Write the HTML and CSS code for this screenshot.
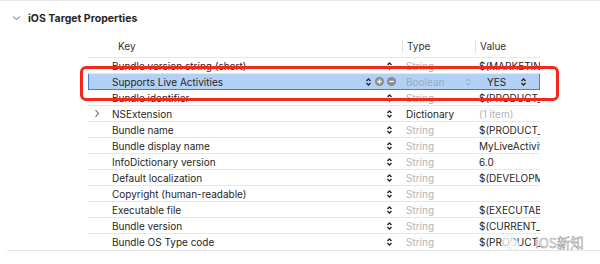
FILE: index.html
```html
<!DOCTYPE html>
<html lang="en">
<head>
    <meta charset="UTF-8">
    <title>iOS Target Properties</title>
    <link rel="stylesheet" href="styles.css">
</head>
<body>
<div class="pane">
    <div class="section-title">
        <svg class="chevron-down" width="9" height="6" viewBox="0 0 9 6"><path d="M1 1.5 L4.5 4.5 L8 1.5" fill="none" stroke="#a0a0a0" stroke-width="1.1"/></svg>
        <span>iOS Target Properties</span>
    </div>

    <div class="table">
        <div class="head">
            <div class="hcell key-h">Key</div>
            <div class="hcell type-h">Type</div>
            <div class="hcell value-h">Value</div>
        </div>

        <div class="row">
            <div class="cell key"><span class="name">Bundle version string (short)</span><svg class="stepper" width="7" height="10" viewBox="0 0 7 10"><path d="M1.5 4 L3.5 2 L5.5 4 M1.5 6 L3.5 8 L5.5 6" fill="none" stroke="#222" stroke-width="1.3"/></svg></div>
            <div class="cell type muted">String</div>
            <div class="cell value">$(MARKETING_VERSION)</div>
        </div>

        <div class="row selected">
            <div class="cell key">
                <span class="name">Supports Live Activities</span>
                <span class="tools">
                    <svg class="stepper" width="7" height="10" viewBox="0 0 7 10"><path d="M1.5 4 L3.5 2 L5.5 4 M1.5 6 L3.5 8 L5.5 6" fill="none" stroke="#222" stroke-width="1.3"/></svg>
                    <svg class="round" width="9" height="9" viewBox="0 0 9 9"><circle cx="4.5" cy="4.5" r="4.5" fill="#8b8b8b"/><path d="M2.2 4.5 H6.8 M4.5 2.2 V6.8" stroke="#fff" stroke-width="1.3"/></svg>
                    <svg class="round" width="9" height="9" viewBox="0 0 9 9"><circle cx="4.5" cy="4.5" r="4.5" fill="#8b8b8b"/><path d="M2.2 4.5 H6.8" stroke="#fff" stroke-width="1.3"/></svg>
                </span>
            </div>
            <div class="cell type muted split"><span>Boolean</span><svg class="stepper" width="7" height="10" viewBox="0 0 7 10"><path d="M1.5 4 L3.5 2 L5.5 4 M1.5 6 L3.5 8 L5.5 6" fill="none" stroke="#9fb3cc" stroke-width="1.1"/></svg></div>
            <div class="cell value split yes"><span>YES</span><svg class="stepper" width="7" height="10" viewBox="0 0 7 10"><path d="M1.5 4 L3.5 2 L5.5 4 M1.5 6 L3.5 8 L5.5 6" fill="none" stroke="#222" stroke-width="1.3"/></svg></div>
        </div>

        <div class="row">
            <div class="cell key"><span class="name">Bundle identifier</span><svg class="stepper" width="7" height="10" viewBox="0 0 7 10"><path d="M1.5 4 L3.5 2 L5.5 4 M1.5 6 L3.5 8 L5.5 6" fill="none" stroke="#222" stroke-width="1.3"/></svg></div>
            <div class="cell type muted">String</div>
            <div class="cell value">$(PRODUCT_BUNDLE_IDENTIFIER)</div>
        </div>

        <div class="row">
            <div class="cell key"><svg class="disclosure" width="6" height="9" viewBox="0 0 6 9"><path d="M1.5 1 L4.5 4.5 L1.5 8" fill="none" stroke="#666" stroke-width="1.1"/></svg><span class="name">NSExtension</span><svg class="stepper" width="7" height="10" viewBox="0 0 7 10"><path d="M1.5 4 L3.5 2 L5.5 4 M1.5 6 L3.5 8 L5.5 6" fill="none" stroke="#222" stroke-width="1.3"/></svg></div>
            <div class="cell type">Dictionary</div>
            <div class="cell value muted">(1 item)</div>
        </div>

        <div class="row">
            <div class="cell key"><span class="name">Bundle name</span><svg class="stepper" width="7" height="10" viewBox="0 0 7 10"><path d="M1.5 4 L3.5 2 L5.5 4 M1.5 6 L3.5 8 L5.5 6" fill="none" stroke="#222" stroke-width="1.3"/></svg></div>
            <div class="cell type muted">String</div>
            <div class="cell value">$(PRODUCT_NAME)</div>
        </div>

        <div class="row">
            <div class="cell key"><span class="name">Bundle display name</span><svg class="stepper" width="7" height="10" viewBox="0 0 7 10"><path d="M1.5 4 L3.5 2 L5.5 4 M1.5 6 L3.5 8 L5.5 6" fill="none" stroke="#222" stroke-width="1.3"/></svg></div>
            <div class="cell type muted">String</div>
            <div class="cell value">MyLiveActivity</div>
        </div>

        <div class="row">
            <div class="cell key"><span class="name">InfoDictionary version</span><svg class="stepper" width="7" height="10" viewBox="0 0 7 10"><path d="M1.5 4 L3.5 2 L5.5 4 M1.5 6 L3.5 8 L5.5 6" fill="none" stroke="#222" stroke-width="1.3"/></svg></div>
            <div class="cell type muted">String</div>
            <div class="cell value">6.0</div>
        </div>

        <div class="row">
            <div class="cell key"><span class="name">Default localization</span><svg class="stepper" width="7" height="10" viewBox="0 0 7 10"><path d="M1.5 4 L3.5 2 L5.5 4 M1.5 6 L3.5 8 L5.5 6" fill="none" stroke="#222" stroke-width="1.3"/></svg></div>
            <div class="cell type muted">String</div>
            <div class="cell value">$(DEVELOPMENT_LANGUAGE)</div>
        </div>

        <div class="row">
            <div class="cell key"><span class="name">Copyright (human-readable)</span><svg class="stepper" width="7" height="10" viewBox="0 0 7 10"><path d="M1.5 4 L3.5 2 L5.5 4 M1.5 6 L3.5 8 L5.5 6" fill="none" stroke="#222" stroke-width="1.3"/></svg></div>
            <div class="cell type muted">String</div>
            <div class="cell value"></div>
        </div>

        <div class="row">
            <div class="cell key"><span class="name">Executable file</span><svg class="stepper" width="7" height="10" viewBox="0 0 7 10"><path d="M1.5 4 L3.5 2 L5.5 4 M1.5 6 L3.5 8 L5.5 6" fill="none" stroke="#222" stroke-width="1.3"/></svg></div>
            <div class="cell type muted">String</div>
            <div class="cell value">$(EXECUTABLE_NAME)</div>
        </div>

        <div class="row">
            <div class="cell key"><span class="name">Bundle version</span><svg class="stepper" width="7" height="10" viewBox="0 0 7 10"><path d="M1.5 4 L3.5 2 L5.5 4 M1.5 6 L3.5 8 L5.5 6" fill="none" stroke="#222" stroke-width="1.3"/></svg></div>
            <div class="cell type muted">String</div>
            <div class="cell value">$(CURRENT_PROJECT_VERSION)</div>
        </div>

        <div class="row last">
            <div class="cell key"><span class="name">Bundle OS Type code</span><svg class="stepper" width="7" height="10" viewBox="0 0 7 10"><path d="M1.5 4 L3.5 2 L5.5 4 M1.5 6 L3.5 8 L5.5 6" fill="none" stroke="#222" stroke-width="1.3"/></svg></div>
            <div class="cell type muted">String</div>
            <div class="cell value">$(PRODUCT_BUNDLE_PACKAGE_TYPE)</div>
        </div>
    </div>
    <div class="section-end"></div>

    <!-- annotation drawn over the screenshot -->
    <div class="highlight"></div>

    <div class="watermark">
        <svg class="wm-logo" width="20" height="17" viewBox="0 0 20 17"><circle cx="7.5" cy="7.5" r="6.5" fill="rgba(255,255,255,0.75)" stroke="#cfcfcf" stroke-width="0.8" stroke-dasharray="1.5 1"/><circle cx="13" cy="11" r="5.2" fill="rgba(255,255,255,0.75)" stroke="#cfcfcf" stroke-width="0.8" stroke-dasharray="1.5 1"/></svg>
        <span>iOS新知</span>
    </div>
</div>
</body>
</html>
```

FILE: styles.css
```css
* {
    box-sizing: border-box;
    margin: 0;
    padding: 0;
}

body {
    font-family: Inter, "Liberation Sans", sans-serif;
    font-size: 10px;
    color: #262626;
    background: #fff;
}

.pane {
    position: relative;
    width: 600px;
    height: 264px;
    border-top: 1px solid #e6e6e6;
}

.section-title {
    display: flex;
    align-items: center;
    height: 34px;
    padding-left: 12px;
    font-weight: 700;
    font-size: 10.5px;
}

.chevron-down {
    margin-right: 7px;
}

.table {
    margin-left: 88px;
    width: 452px;
}

.head {
    display: flex;
    height: 23px;
    align-items: center;
    border-bottom: 1px solid #e8e8e8;
}

.hcell {
    height: 13px;
    line-height: 13px;
    color: #333;
}

.key-h {
    width: 314px;
    padding-left: 30px;
}

.type-h {
    width: 73px;
    padding-left: 4px;
    border-left: 1px solid #e2e2e2;
}

.value-h {
    width: 65px;
    padding-left: 4px;
    border-left: 1px solid #e2e2e2;
}

.row {
    display: flex;
    height: 16px;
    border-bottom: 1px solid #e8e8e8;
}

.row.last {
    border-bottom: none;
}

.cell {
    display: flex;
    align-items: center;
    white-space: nowrap;
    overflow: hidden;
}

.key {
    position: relative;
    width: 314px;
    padding-left: 24px;
    padding-right: 9px;
}

.key .name {
    flex: 1;
}

.disclosure {
    position: absolute;
    left: 6px;
    top: 3px;
}

.type {
    width: 73px;
    padding-left: 4px;
}

.value {
    width: 65px;
    padding-left: 4px;
}

.muted {
    color: #b3b3b3;
}

.tools {
    display: flex;
    align-items: center;
    gap: 3px;
    margin-right: -3px;
}

.selected {
    background: #b3d1f7;
    border-left: 1px solid #3f7fdc;
    border-right: 1px solid #3f7fdc;
    border-bottom: 1px solid #3f7fdc;
}

.selected .key {
    width: 313px;
    padding-left: 23px;
}

.selected .type {
    color: #9aa9bd;
}

.split {
    justify-content: space-between;
    padding-right: 3px;
}

.yes {
    width: 64px;
    padding-left: 12px;
    padding-right: 12px;
}

.section-end {
    margin-left: 7px;
    border-top: 1px solid #e4e4e4;
}

.highlight {
    position: absolute;
    left: 80px;
    top: 65px;
    width: 479px;
    height: 35px;
    border: 3px solid #f4271c;
    border-radius: 6px;
}

.watermark {
    position: absolute;
    left: 501px;
    top: 231px;
    display: flex;
    align-items: center;
    gap: 14px;
    font-family: "Noto Sans CJK SC", sans-serif;
    font-size: 13.5px;
    color: #fff;
    -webkit-text-stroke: 0.45px #8a8a8a;
}
```
